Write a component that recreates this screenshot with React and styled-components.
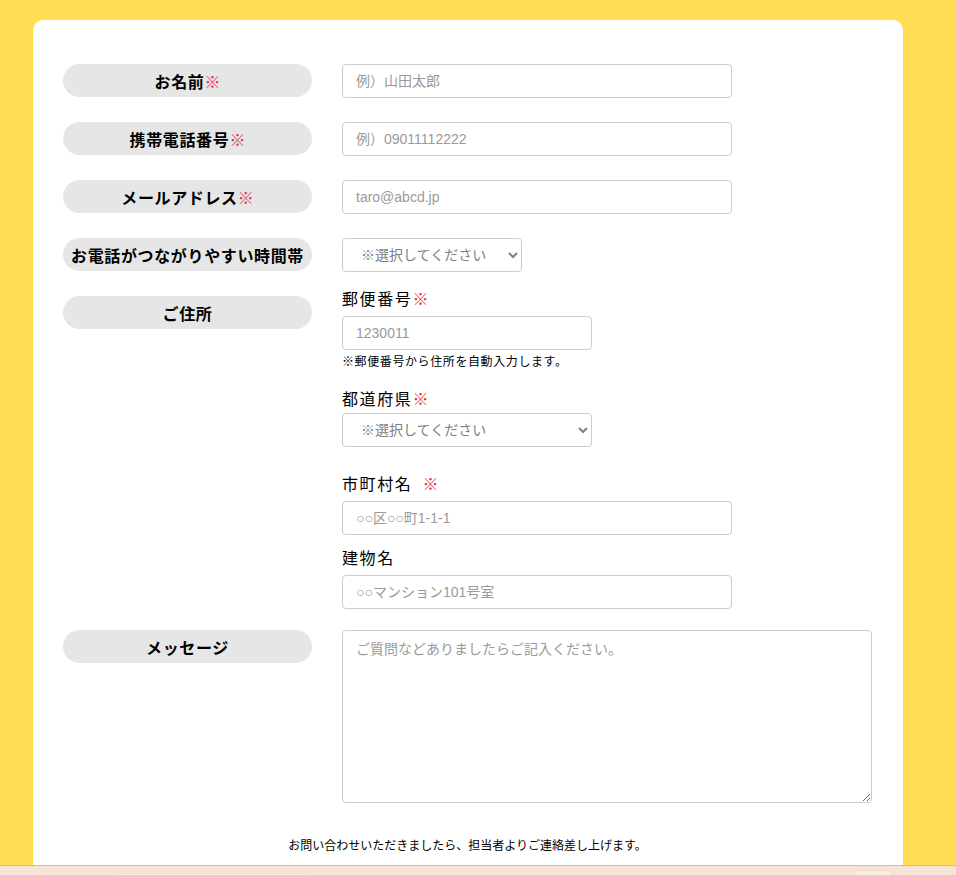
import React from "react";
import styled, { createGlobalStyle } from "styled-components";

const GlobalStyle = createGlobalStyle`
  html, body { margin: 0; padding: 0; }
  body {
    background: #ffdd55;
    font-family: "Noto Sans CJK JP", "Noto Sans", sans-serif;
    color: #000;
  }
`;

const Page = styled.div`
  padding: 20px 0 0 33px;
`;

const Card = styled.main`
  width: 870px;
  box-sizing: border-box;
  background: #fff;
  border-radius: 10px 10px 0 0;
  padding: 44px 31px 60px 30px;
`;

const Form = styled.form`
  display: flex;
  flex-direction: column;
`;

const Row = styled.div`
  display: grid;
  grid-template-columns: 249px 1fr;
  column-gap: 30px;
  align-items: start;
  margin-top: ${(p) => p.$mt || 0}px;
`;

const Label = styled.div`
  height: 33px;
  margin-top: ${(p) => p.$offset || 0}px;
  border-radius: 17px;
  background: #e6e6e6;
  display: flex;
  align-items: center;
  justify-content: center;
  font-size: 16px;
  font-weight: 700;
  letter-spacing: 0.04em;
  white-space: nowrap;
`;

const Req = styled.span`
  color: #e5334b;
  font-weight: 400;
  letter-spacing: 0;
  margin-left: ${(p) => (p.$space ? "10px" : "0")};
`;

const fieldBase = `
  box-sizing: border-box;
  border: 1px solid #cccccc;
  border-radius: 4px;
  background: #fff;
  font-family: "Liberation Sans", "Noto Sans CJK JP", sans-serif;
  font-size: 14px;
  color: #333;
  outline: none;
  &::placeholder { color: #9a9a9a; }
`;

const Input = styled.input`
  ${fieldBase}
  display: block;
  width: ${(p) => p.$w || 390}px;
  height: 34px;
  padding: 0 13px;
  margin-top: ${(p) => p.$mt || 0}px;
`;

const Select = styled.select`
  ${fieldBase}
  display: block;
  width: ${(p) => p.$w}px;
  height: 34px;
  padding: 0 6px 0 14px;
  color: #808080;
  margin-top: ${(p) => p.$mt || 0}px;
`;

const TextArea = styled.textarea`
  ${fieldBase}
  display: block;
  width: 530px;
  height: 173px;
  padding: 8px 13px;
  resize: vertical;
  line-height: 1.5;
`;

const AddressCol = styled.div`
  display: flex;
  flex-direction: column;
  align-items: flex-start;
`;

const SubLabel = styled.div`
  font-size: 16px;
  line-height: 24px;
  letter-spacing: 0.1em;
  margin-top: ${(p) => p.$mt || 0}px;
`;

const Note = styled.p`
  margin: 2px 0 0;
  font-size: 12px;
  line-height: 18px;
  letter-spacing: 0.05em;
`;

const Footer = styled.p`
  margin: 33px 0 0;
  text-align: center;
  font-size: 12px;
  line-height: 18px;
`;

const BottomBar = styled.div`
  position: fixed;
  left: 0;
  right: 0;
  bottom: 0;
  height: 9px;
  border-top: 1px solid #cbbcaf;
  background: #f6e5d6;
`;

const BarTab = styled.div`
  position: absolute;
  top: ${(p) => p.$top}px;
  left: ${(p) => p.$left}px;
  width: ${(p) => p.$w}px;
  height: 20px;
  border-radius: 5px;
  background: #f9eee4;
  border: 1px solid #eedfd0;
`;

export default function App() {
  return (
    <>
      <GlobalStyle />
      <Page>
        <Card>
          <Form onSubmit={(e) => e.preventDefault()}>
            <Row>
              <Label>
                お名前<Req>※</Req>
              </Label>
              <Input placeholder="例）山田太郎" />
            </Row>
            <Row $mt={24}>
              <Label>
                携帯電話番号<Req>※</Req>
              </Label>
              <Input placeholder="例）09011112222" />
            </Row>
            <Row $mt={24}>
              <Label>
                メールアドレス<Req>※</Req>
              </Label>
              <Input placeholder="taro@abcd.jp" />
            </Row>
            <Row $mt={24}>
              <Label>お電話がつながりやすい時間帯</Label>
              <Select $w={180} defaultValue="">
                <option value="">※選択してください</option>
                <option>9:00〜12:00</option>
                <option>12:00〜15:00</option>
                <option>15:00〜18:00</option>
              </Select>
            </Row>
            <Row $mt={14}>
              <Label $offset={10}>ご住所</Label>
              <AddressCol>
                <SubLabel>
                  郵便番号<Req>※</Req>
                </SubLabel>
                <Input $w={250} $mt={6} placeholder="1230011" />
                <Note>※郵便番号から住所を自動入力します。</Note>
                <SubLabel $mt={16}>
                  都道府県<Req>※</Req>
                </SubLabel>
                <Select $w={250} $mt={3} defaultValue="">
                  <option value="">※選択してください</option>
                  <option>東京都</option>
                  <option>大阪府</option>
                </Select>
                <SubLabel $mt={24}>
                  市町村名<Req $space>※</Req>
                </SubLabel>
                <Input $mt={6} placeholder="○○区○○町1-1-1" />
                <SubLabel $mt={10}>建物名</SubLabel>
                <Input $mt={6} placeholder="○○マンション101号室" />
              </AddressCol>
            </Row>
            <Row $mt={21}>
              <Label>メッセージ</Label>
              <TextArea placeholder="ご質問などありましたらご記入ください。" />
            </Row>
          </Form>
          <Footer>お問い合わせいただきましたら、担当者よりご連絡差し上げます。</Footer>
        </Card>
      </Page>
      <BottomBar>
        <BarTab $left={113} $top={7} $w={197} />
        <BarTab $left={855} $top={4} $w={35} />
      </BottomBar>
    </>
  );
}
